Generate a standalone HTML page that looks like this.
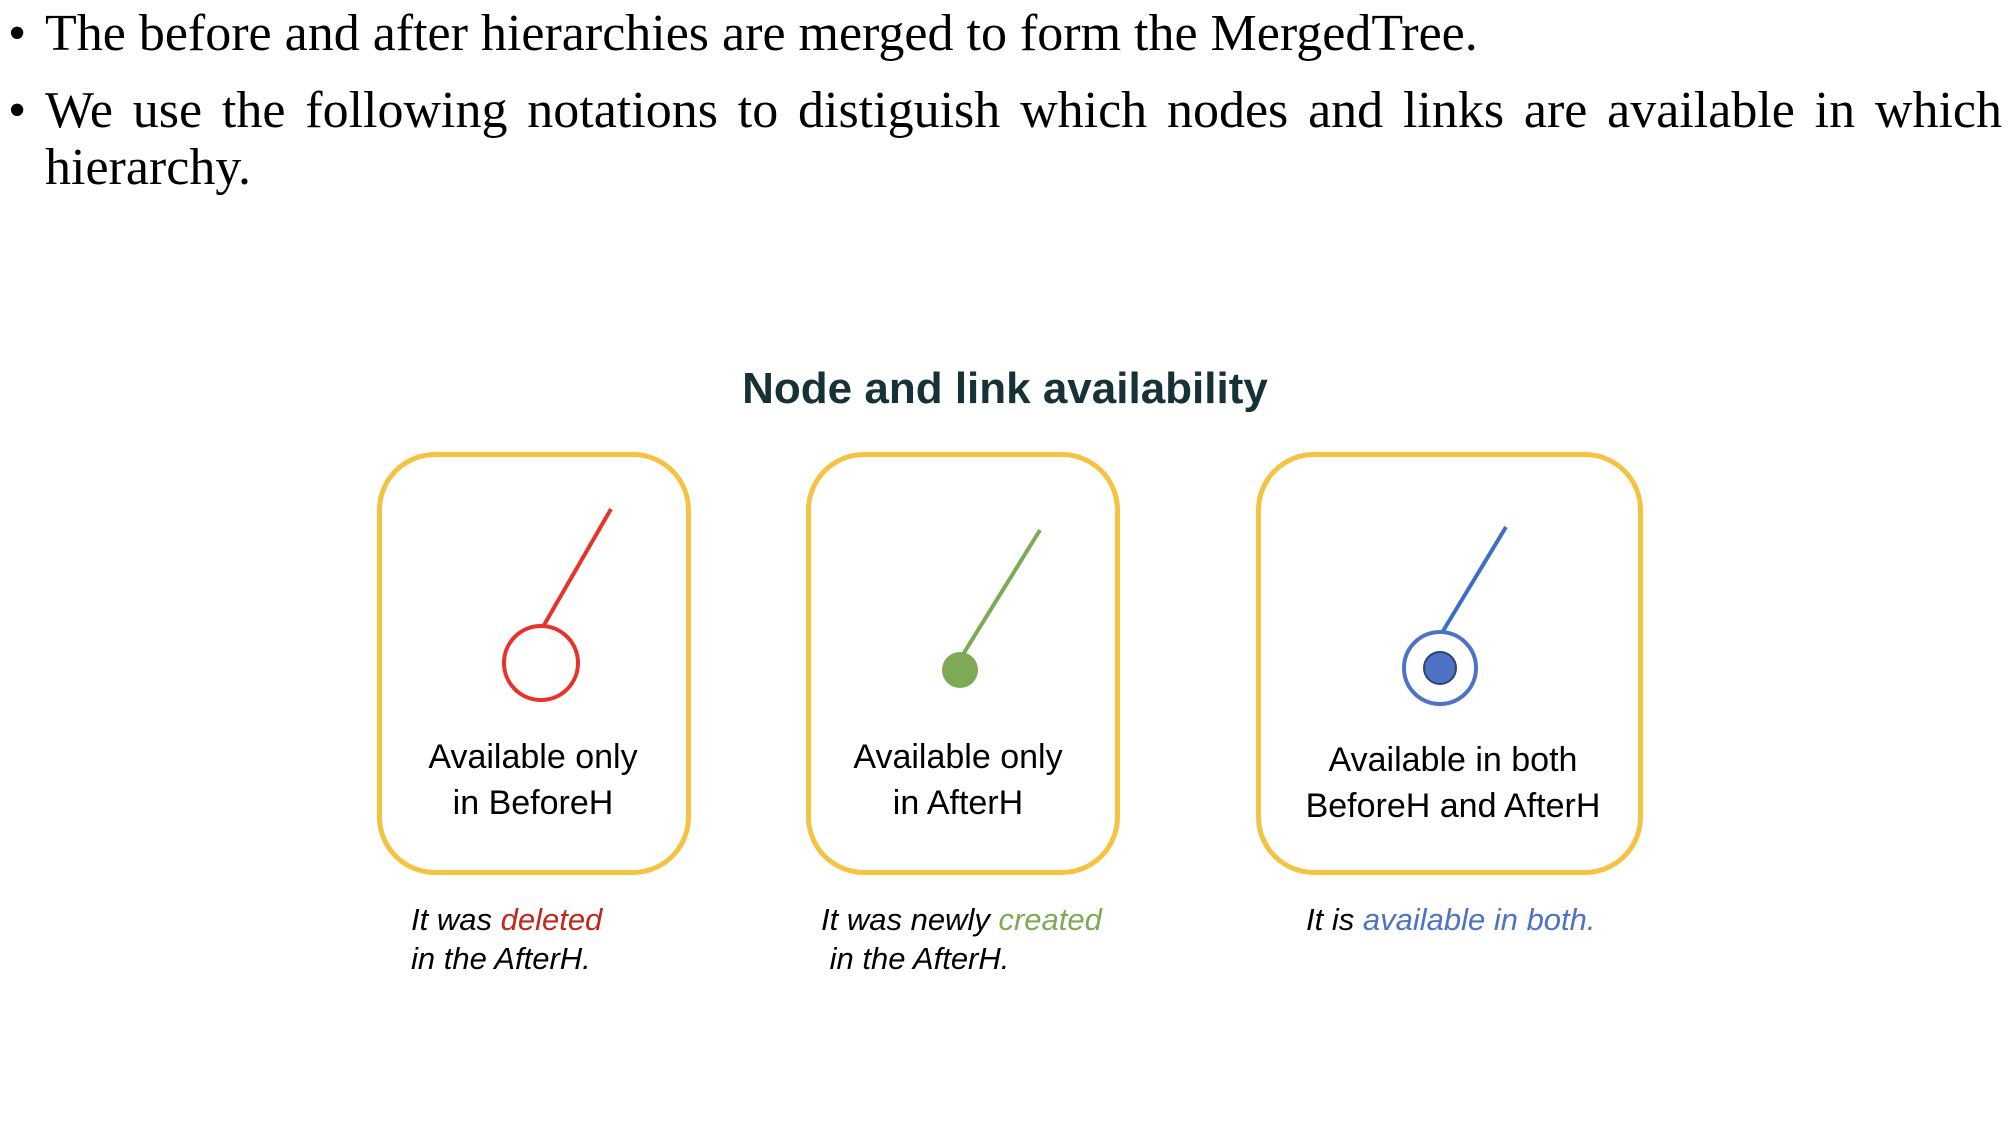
<!DOCTYPE html>
<html><head><meta charset="utf-8"><style>
body{margin:0;width:2012px;height:1124px;background:#fff;position:relative;overflow:hidden}
.t{position:absolute;font-family:"Liberation Serif",serif;font-size:52px;color:#000;line-height:57px}
.c{position:absolute;font-family:"Liberation Sans",sans-serif;white-space:nowrap}
.box{position:absolute;border:5px solid #f5c342;border-radius:58px;box-sizing:border-box}
.bt{position:absolute;font-family:"Liberation Sans",sans-serif;font-size:34px;line-height:46px;text-align:center;color:#000;transform:translateX(-50%);white-space:nowrap}
.cap{position:absolute;font-family:"Liberation Sans",sans-serif;font-style:italic;font-size:31px;line-height:39px;white-space:nowrap}
</style></head><body>
<div class="t" style="left:8px;top:5px">•</div>
<div class="t" style="left:45px;top:5px">The before and after hierarchies are merged to form the MergedTree.</div>
<div class="t" style="left:8px;top:82px">•</div>
<div class="t" style="left:45px;top:82px;width:1957px;text-align:justify;text-align-last:left">We use the following notations to distiguish which nodes and links are available in which hierarchy.</div>
<div class="c" style="left:0;width:2010px;text-align:center;top:364px;font-size:44px;font-weight:bold;color:#163236">Node and link availability</div>
<div class="box" style="left:377px;top:452px;width:314px;height:423px"></div>
<div class="box" style="left:806px;top:452px;width:314px;height:423px"></div>
<div class="box" style="left:1256px;top:452px;width:387px;height:423px"></div>
<svg style="position:absolute;left:0;top:0" width="2012" height="1124">
<line x1="611" y1="509" x2="544" y2="625" stroke="#e8322a" stroke-width="4"/>
<circle cx="541" cy="663" r="37" fill="none" stroke="#e8322a" stroke-width="4"/>
<line x1="1040" y1="530" x2="962" y2="656" stroke="#7dab55" stroke-width="4"/>
<circle cx="960" cy="670" r="18" fill="#7dab55"/>
<line x1="1506" y1="527" x2="1443" y2="631" stroke="#3a6fc4" stroke-width="4"/>
<circle cx="1440" cy="668" r="36" fill="none" stroke="#4e72c4" stroke-width="4"/>
<circle cx="1440" cy="668" r="16" fill="#4e72c4" stroke="#2c4373" stroke-width="2"/>
</svg>
<div class="bt" style="left:533px;top:734px">Available only<br>in BeforeH</div>
<div class="bt" style="left:958px;top:734px">Available only<br>in AfterH</div>
<div class="bt" style="left:1453px;top:737px">Available in both<br>BeforeH and AfterH</div>
<div class="cap" style="left:411px;top:900px">It was <span style="color:#c1271d">deleted</span><br>in the AfterH.</div>
<div class="cap" style="left:821px;top:900px">It was newly <span style="color:#7dab55">created</span><br>&nbsp;in the AfterH.</div>
<div class="cap" style="left:1306px;top:900px">It is <span style="color:#4e72c4">available in both.</span></div>
</body></html>
